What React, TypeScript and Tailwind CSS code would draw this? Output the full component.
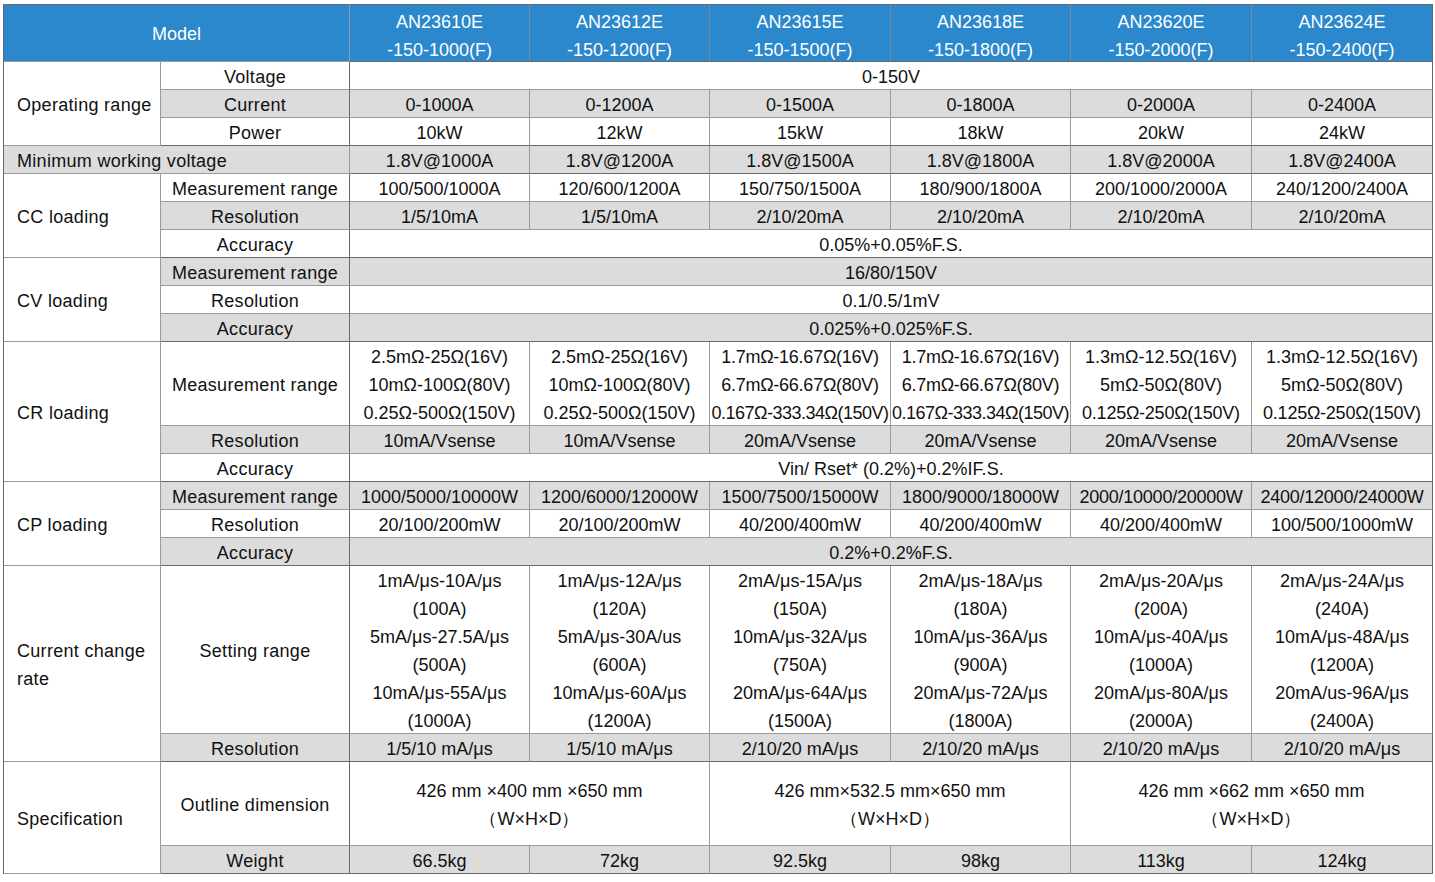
import React from "react";

const models = [
  ["AN23610E", "-150-1000(F)"],
  ["AN23612E", "-150-1200(F)"],
  ["AN23615E", "-150-1500(F)"],
  ["AN23618E", "-150-1800(F)"],
  ["AN23620E", "-150-2000(F)"],
  ["AN23624E", "-150-2400(F)"],
];

const current = ["0-1000A", "0-1200A", "0-1500A", "0-1800A", "0-2000A", "0-2400A"];
const power = ["10kW", "12kW", "15kW", "18kW", "20kW", "24kW"];
const minVolt = ["1.8V@1000A", "1.8V@1200A", "1.8V@1500A", "1.8V@1800A", "1.8V@2000A", "1.8V@2400A"];
const ccRange = ["100/500/1000A", "120/600/1200A", "150/750/1500A", "180/900/1800A", "200/1000/2000A", "240/1200/2400A"];
const ccRes = ["1/5/10mA", "1/5/10mA", "2/10/20mA", "2/10/20mA", "2/10/20mA", "2/10/20mA"];

const crRange = [
  ["2.5mΩ-25Ω(16V)", "10mΩ-100Ω(80V)", "0.25Ω-500Ω(150V)"],
  ["2.5mΩ-25Ω(16V)", "10mΩ-100Ω(80V)", "0.25Ω-500Ω(150V)"],
  ["1.7mΩ-16.67Ω(16V)", "6.7mΩ-66.67Ω(80V)", "0.167Ω-333.34Ω(150V)"],
  ["1.7mΩ-16.67Ω(16V)", "6.7mΩ-66.67Ω(80V)", "0.167Ω-333.34Ω(150V)"],
  ["1.3mΩ-12.5Ω(16V)", "5mΩ-50Ω(80V)", "0.125Ω-250Ω(150V)"],
  ["1.3mΩ-12.5Ω(16V)", "5mΩ-50Ω(80V)", "0.125Ω-250Ω(150V)"],
];
const crRes = ["10mA/Vsense", "10mA/Vsense", "20mA/Vsense", "20mA/Vsense", "20mA/Vsense", "20mA/Vsense"];

const cpRange = ["1000/5000/10000W", "1200/6000/12000W", "1500/7500/15000W", "1800/9000/18000W", "2000/10000/20000W", "2400/12000/24000W"];
const cpRes = ["20/100/200mW", "20/100/200mW", "40/200/400mW", "40/200/400mW", "40/200/400mW", "100/500/1000mW"];

const slew = [
  ["1mA/μs-10A/μs", "(100A)", "5mA/μs-27.5A/μs", "(500A)", "10mA/μs-55A/μs", "(1000A)"],
  ["1mA/μs-12A/μs", "(120A)", "5mA/μs-30A/us", "(600A)", "10mA/μs-60A/μs", "(1200A)"],
  ["2mA/μs-15A/μs", "(150A)", "10mA/μs-32A/μs", "(750A)", "20mA/μs-64A/μs", "(1500A)"],
  ["2mA/μs-18A/μs", "(180A)", "10mA/μs-36A/μs", "(900A)", "20mA/μs-72A/μs", "(1800A)"],
  ["2mA/μs-20A/μs", "(200A)", "10mA/μs-40A/μs", "(1000A)", "20mA/μs-80A/μs", "(2000A)"],
  ["2mA/μs-24A/μs", "(240A)", "10mA/μs-48A/μs", "(1200A)", "20mA/us-96A/μs", "(2400A)"],
];
const slewRes = ["1/5/10 mA/μs", "1/5/10 mA/μs", "2/10/20 mA/μs", "2/10/20 mA/μs", "2/10/20 mA/μs", "2/10/20 mA/μs"];

const dims = ["426 mm ×400 mm ×650 mm", "426 mm×532.5 mm×650 mm", "426 mm ×662 mm ×650 mm"];
const weight = ["66.5kg", "72kg", "92.5kg", "98kg", "113kg", "124kg"];

// squeeze the longest strings so they stay inside a 180px column
function fit(s: string) {
  if (s.length >= 20) return "tracking-[-0.5px]";
  if (s.length >= 17) return "tracking-[-0.25px]";
  return "";
}

type CellProps = { children?: React.ReactNode; className?: string };

function Cell({ children, className = "" }: CellProps) {
  return (
    <div className={`flex items-center justify-center whitespace-nowrap border-r border-b border-[#9a9a9a] pt-[2px] leading-[28px] ${className}`}>
      {children}
    </div>
  );
}

function Group({ label, span }: { label: React.ReactNode; span: string }) {
  return (
    <Cell className={`${span} justify-start! pl-[13px] tracking-[0.3px] whitespace-normal border-[#6a6a6a] bg-white`}>
      <span>{label}</span>
    </Cell>
  );
}

function Label({ text, gray, last }: { text: string; gray?: boolean; last?: boolean }) {
  return (
    <Cell className={`tracking-[0.3px] border-r-[#6a6a6a] ${gray ? "bg-[#dcdcdc]" : "bg-white"} ${last ? "border-b-[#6a6a6a]" : ""}`}>
      {text}
    </Cell>
  );
}

function Values({ items, gray, last }: { items: string[]; gray?: boolean; last?: boolean }) {
  return (
    <>
      {items.map((v, i) => (
        <Cell
          key={i}
          className={`${fit(v)} ${gray ? "bg-[#dcdcdc]" : "bg-white"} ${last ? "border-b-[#6a6a6a]" : ""} ${i === 5 ? "border-r-[#6a6a6a]" : ""}`}
        >
          {v}
        </Cell>
      ))}
    </>
  );
}

function Wide({ text, gray, last }: { text: string; gray?: boolean; last?: boolean }) {
  return (
    <Cell className={`col-span-6 border-r-[#6a6a6a] ${gray ? "bg-[#dcdcdc]" : "bg-white"} ${last ? "border-b-[#6a6a6a]" : ""}`}>
      {text}
    </Cell>
  );
}

function Lines({ items, gray, last }: { items: string[][]; gray?: boolean; last?: boolean }) {
  return (
    <>
      {items.map((lines, i) => (
        <Cell
          key={i}
          className={`flex-col ${gray ? "bg-[#dcdcdc]" : "bg-white"} ${last ? "border-b-[#6a6a6a]" : ""} ${i === 5 ? "border-r-[#6a6a6a]" : ""}`}
        >
          {lines.map((l, j) => (
            <span key={j} className={fit(l)}>{l}</span>
          ))}
        </Cell>
      ))}
    </>
  );
}

export default function App() {
  return (
    <div className="min-h-[882px] w-[1435px] bg-white pt-[4px] pl-[3px] font-['Liberation_Sans',Arial,sans-serif] text-[18px] text-[#111]">
      <div className="grid w-[1430px] grid-cols-[157px_189px_180px_180px_181px_180px_181px_181px] grid-rows-[57px_repeat(10,28px)_84px_repeat(5,28px)_168px_28px_84px_28px] border-l border-t border-[#6a6a6a]">
        {/* header */}
        <Cell className="col-span-2 bg-[#2b88cc] text-white border-[#6a6a6a]">Model</Cell>
        {models.map(([a, b], i) => (
          <Cell key={a} className={`flex-col pt-[5px]! bg-[#2b88cc] text-white border-b-[#6a6a6a] ${i === 5 ? "border-r-[#6a6a6a]" : "border-r-[#7a8a98]"}`}>
            <span>{a}</span>
            <span>{b}</span>
          </Cell>
        ))}

        {/* operating range */}
        <Group label="Operating range" span="row-span-3" />
        <Label text="Voltage" />
        <Wide text="0-150V" />
        <Label text="Current" gray />
        <Values items={current} gray />
        <Label text="Power" last />
        <Values items={power} last />

        <Cell className="col-span-2 justify-start! pl-[13px] tracking-[0.3px] bg-[#dcdcdc] border-[#6a6a6a]">
          Minimum working voltage
        </Cell>
        <Values items={minVolt} gray last />

        {/* CC */}
        <Group label="CC loading" span="row-span-3" />
        <Label text="Measurement range" />
        <Values items={ccRange} />
        <Label text="Resolution" gray />
        <Values items={ccRes} gray />
        <Label text="Accuracy" last />
        <Wide text="0.05%+0.05%F.S." last />

        {/* CV */}
        <Group label="CV loading" span="row-span-3" />
        <Label text="Measurement range" gray />
        <Wide text="16/80/150V" gray />
        <Label text="Resolution" />
        <Wide text="0.1/0.5/1mV" />
        <Label text="Accuracy" gray last />
        <Wide text="0.025%+0.025%F.S." gray last />

        {/* CR */}
        <Group label="CR loading" span="row-span-3" />
        <Label text="Measurement range" />
        <Lines items={crRange} />
        <Label text="Resolution" gray />
        <Values items={crRes} gray />
        <Label text="Accuracy" last />
        <Wide text="Vin/ Rset* (0.2%)+0.2%IF.S." last />

        {/* CP */}
        <Group label="CP loading" span="row-span-3" />
        <Label text="Measurement range" gray />
        <Values items={cpRange} gray />
        <Label text="Resolution" />
        <Values items={cpRes} />
        <Label text="Accuracy" gray last />
        <Wide text="0.2%+0.2%F.S." gray last />

        {/* current change rate */}
        <Group label={<>Current change<br />rate</>} span="row-span-2" />
        <Label text="Setting range" />
        <Lines items={slew} />
        <Label text="Resolution" gray last />
        <Values items={slewRes} gray last />

        {/* specification */}
        <Group label="Specification" span="row-span-2" />
        <Label text="Outline dimension" />
        {dims.map((d, i) => (
          <Cell key={d} className={`col-span-2 flex-col bg-white ${i === 2 ? "border-r-[#6a6a6a]" : ""}`}>
            <span>{d}</span>
            <span>（W×H×D）</span>
          </Cell>
        ))}
        <Label text="Weight" gray last />
        <Values items={weight} gray last />
      </div>
    </div>
  );
}
